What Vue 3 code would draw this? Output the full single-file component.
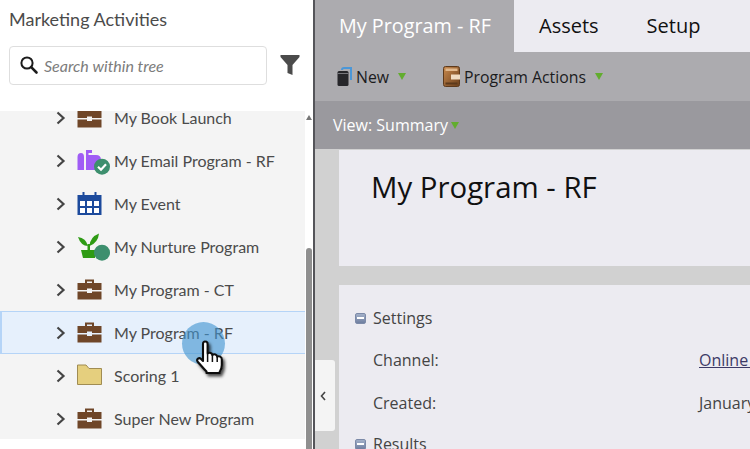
<script setup>
const rows = [
  { name: 'My Book Launch', icon: 'case' },
  { name: 'My Email Program - RF', icon: 'email' },
  { name: 'My Event', icon: 'event' },
  { name: 'My Nurture Program', icon: 'nurture' },
  { name: 'My Program - CT', icon: 'case' },
  { name: 'My Program - RF', icon: 'case', selected: true },
  { name: 'Scoring 1', icon: 'folder' },
  { name: 'Super New Program', icon: 'case' }
]
</script>

<template>
  <div class="app">
    <aside class="side">
      <h1 class="side-title">Marketing Activities</h1>
      <div class="search-row">
        <div class="search">
          <svg class="search-icon" width="20" height="20" viewBox="0 0 20 20">
            <circle cx="8" cy="8" r="5.6" fill="none" stroke="#1c1c1c" stroke-width="2" />
            <path d="M12.2 12.2 L17.5 17.5" stroke="#1c1c1c" stroke-width="2.6" stroke-linecap="round" />
          </svg>
          <span class="search-text">Search within tree</span>
        </div>
        <svg class="filter" width="20" height="22" viewBox="0 0 20 22">
          <path d="M0.5 1 H19.5 V3 L12.5 11 V21 L7.5 19 V11 L0.5 3 Z" fill="#4b4b4b" />
        </svg>
      </div>
      <div class="tree">
        <ul class="tree-list">
          <li v-for="row in rows" :key="row.name" class="tree-row" :class="{ selected: row.selected }">
            <svg class="chev" width="10" height="14" viewBox="0 0 10 14">
              <path d="M1.5 1.5 L7.5 7 L1.5 12.5" fill="none" stroke="#444" stroke-width="2.2" />
            </svg>
            <svg class="node-icon" width="28" height="28" viewBox="0 0 28 28">
              <template v-if="row.icon === 'case'">
                <path d="M9 7 V4.5 H16 V7" fill="none" stroke="#6f4628" stroke-width="2" />
                <path d="M0.5 7 H24.5 V14 H15 V12.5 H10 V14 H0.5 Z" fill="#6f4628" />
                <path d="M0.5 15.5 H10 V17 H15 V15.5 H24.5 V23.5 H0.5 Z" fill="#6f4628" />
              </template>
              <template v-else-if="row.icon === 'email'">
                <path d="M0.5 10 Q0.5 6 4 6 Q7 6 7 10 V23 H0.5 Z" fill="#a05cf5" />
                <path d="M9 23 V3 H15 V6 H11.5 V8 H19 Q24 8 24 13 V23 Z" fill="#a05cf5" />
                <circle cx="25" cy="19.7" r="8" fill="#3d8f6e" />
                <path d="M21 19.7 L24 22.7 L29 17.2" fill="none" stroke="#fff" stroke-width="2.2" />
              </template>
              <template v-else-if="row.icon === 'event'">
                <path d="M6.5 2 V6 M18.5 2 V6" stroke="#1c4a9c" stroke-width="2" />
                <path d="M0.5 5 H24.5 V25 H0.5 Z" fill="#1c4a9c" />
                <path d="M3 11 h5 v5 h-5 Z M10 11 h5 v5 h-5 Z M17 11 h5 v5 h-5 Z M3 18 h5 v5 h-5 Z M10 18 h5 v5 h-5 Z M17 18 h5 v5 h-5 Z" fill="#fff" />
              </template>
              <template v-else-if="row.icon === 'nurture'">
                <path d="M1 4 Q9 5 11 13 Q4 13 1 4 Z" fill="#2e9b14" />
                <path d="M22 0.5 Q21 10 12.5 13 Q13 4 22 0.5 Z" fill="#2e9b14" />
                <path d="M10.5 11 H13 V18 H10.5 Z" fill="#2e9b14" />
                <path d="M4 17 H18 V25 H6 Z" fill="#2e9b14" />
                <circle cx="25" cy="19.7" r="8" fill="#3d8f6e" />
              </template>
              <template v-else>
                <path d="M0.5 3 H9 L12 6.5 H24.5 V22.5 H0.5 Z" fill="#e5cf7e" stroke="#a08c52" stroke-width="1" />
              </template>
            </svg>
            <span class="node-name">{{ row.name }}</span>
          </li>
        </ul>
        <div class="scrollbar">
          <svg class="scroll-up" width="6" height="5" viewBox="0 0 6 5"><path d="M3 0 L6 5 H0 Z" fill="#777" /></svg>
          <div class="thumb"></div>
        </div>
      </div>
    </aside>

    <main class="main">
      <nav class="tabs">
        <div class="tab active">My Program - RF</div>
        <div class="tab">Assets</div>
        <div class="tab">Setup</div>
      </nav>
      <div class="toolbar">
        <div class="tool tool-new">
          <svg width="15" height="20" viewBox="0 0 15 20">
            <path d="M5 3 Q5 1 7 1 H14 V13" fill="none" stroke="#4b97d8" stroke-width="2" />
            <rect x="0.5" y="4" width="11" height="15" rx="1.5" fill="#26262a" />
            <rect x="0.5" y="6" width="11" height="1" fill="#77777c" />
          </svg>
          <span>New</span>
          <i class="drop"></i>
        </div>
        <div class="tool tool-actions">
          <svg width="18" height="21" viewBox="0 0 18 21">
            <defs>
              <linearGradient id="folio" x1="0" y1="0" x2="1" y2="1">
                <stop offset="0" stop-color="#c98a4e" />
                <stop offset="1" stop-color="#6b3f1c" />
              </linearGradient>
            </defs>
            <rect x="0.5" y="0.5" width="16" height="20" rx="2" fill="url(#folio)" stroke="#5d3a1c" />
            <rect x="2.5" y="2.5" width="12" height="2.5" fill="#e2b98d" />
            <path d="M8 8.5 H17 V13.5 H8 Z" fill="#f0dcc3" />
            <rect x="2.5" y="16.5" width="12" height="2" fill="#5d3a1c" />
          </svg>
          <span>Program Actions</span>
          <i class="drop"></i>
        </div>
      </div>
      <div class="viewbar">
        <span>View: Summary</span>
        <i class="drop"></i>
      </div>
      <div class="content">
        <section class="card head-card">
          <h2 class="page-title">My Program - RF</h2>
        </section>
        <section class="card info-card">
          <div class="group-head">
            <i class="minus"></i><span>Settings</span>
          </div>
          <div class="field first">
            <span class="label">Channel:</span>
            <a class="value link">Online Advertising</a>
          </div>
          <div class="field">
            <span class="label">Created:</span>
            <span class="value">January 12, 2021</span>
          </div>
          <div class="group-head results">
            <i class="minus"></i><span>Results</span>
          </div>
        </section>
        <button class="collapse" aria-label="Collapse">
          <svg width="6" height="10" viewBox="0 0 6 10"><path d="M5 1 L1.5 5 L5 9" fill="none" stroke="#444" stroke-width="1.6" /></svg>
        </button>
      </div>
    </main>

    <div class="click-dot"></div>
    <svg class="hand" width="34" height="44" viewBox="0 0 34 44">
      <defs>
        <filter id="hs" x="-30%" y="-30%" width="170%" height="170%">
          <feDropShadow dx="2" dy="2.5" stdDeviation="1.5" flood-color="#000" flood-opacity=".7" />
        </filter>
      </defs>
      <path filter="url(#hs)"
        d="M8 4 Q8 1.5 10.2 1.5 Q12.6 1.5 12.6 4 V13.5 Q14 12.4 15.6 13 Q17.2 13.6 17.4 15 Q18.6 13.8 20.4 14.4 Q22 15 22.2 16.6 Q23.6 15.8 25.2 16.6 Q26.8 17.4 26.8 19.6 V25 Q26.8 29 24.6 32 V33 H11.5 V31.5 Q9 29 6 25.5 L2.5 21.5 Q1.5 19.8 3 18.6 Q4.6 17.6 6 19 L8 21 Z"
        fill="#fff" stroke="#111" stroke-width="2.1" stroke-linejoin="round" />
      <path d="M12.6 14 V22 M17.4 15 V22 M22.2 16.6 V22" stroke="#111" stroke-width="1.5" fill="none" />
    </svg>
  </div>
</template>

<style>
html, body { margin: 0; padding: 0; background: #fff; overflow: hidden; }
</style>

<style scoped>
.app {
  position: relative;
  display: flex;
  width: 750px;
  height: 449px;
  overflow: hidden;
  font-family: "Open Sans", sans-serif;
  background: #fff;
}
.side {
  display: flex;
  flex-direction: column;
  flex: 0 0 313px;
  width: 313px;
  height: 449px;
  border-right: 2px solid #55555a;
  box-sizing: content-box;
}
.side-title {
  margin: 8px 0 0 9px;
  font: 400 18px/22px Lato, sans-serif;
  color: #4b4b4b;
}
.search-row {
  display: flex;
  align-items: center;
  margin: 15px 0 0 9px;
  height: 40px;
}
.search {
  display: flex;
  align-items: center;
  width: 256px;
  height: 37px;
  border: 1px solid #dedede;
  border-radius: 4px;
  background: #fff;
}
.search-icon { margin-left: 9px; }
.search-text {
  margin-left: 5px;
  padding-top: 1px;
  font: italic 400 16px/20px Lato, sans-serif;
  color: #7c7c7c;
}
.filter { margin-left: 13px; }
.tree {
  display: flex;
  align-items: flex-start;
  margin-top: 26px;
  height: 338px;
  overflow: hidden;
}
.tree-list {
  flex: 0 0 305px;
  height: 343px;
  overflow: hidden;
  list-style: none;
  margin: -15px 0 0;
  padding: 0;
  background: #f4f4f4;
}
.tree-row {
  display: flex;
  align-items: center;
  height: 43px;
  box-sizing: border-box;
  padding-left: 56px;
  color: #4b4b4b;
  font: 400 16px/20px Lato, sans-serif;
}
.tree-row.selected {
  background: #e6f0fc;
  border-top: 1px solid #b5d4f7;
  border-bottom: 1px solid #b5d4f7;
  border-left: 2px solid #b5d4f7;
  padding-left: 54px;
}
.chev { flex: none; }
.node-icon { flex: none; margin-left: 11px; margin-right: 9px; overflow: visible; }
.scrollbar {
  position: relative;
  flex: 1;
  height: 338px;
  background: #fff;
}
.scroll-up { position: absolute; left: 1px; top: 4px; }
.thumb {
  position: absolute;
  left: 1px;
  top: 137px;
  width: 6px;
  bottom: 0;
  background: #8f8f8f;
  border-radius: 3px 3px 0 0;
}
.main {
  flex: 1;
  display: flex;
  flex-direction: column;
  min-width: 0;
}
.tabs {
  display: flex;
  height: 52px;
  background: #ecebf1;
}
.tab {
  flex: none;
  padding: 0 23px 0 25px;
  font: 400 20px/52px "Open Sans", sans-serif;
  color: #111;
  white-space: nowrap;
}
.tab.active {
  width: 199px;
  box-sizing: border-box;
  padding: 0 0 0 24px;
  background: #acabaf;
  color: #fff;
  font-size: 19.8px;
}
.toolbar {
  display: flex;
  align-items: center;
  height: 49px;
  background: #acabaf;
  font-size: 15.8px;
  color: #1b1b1d;
}
.tool { display: flex; align-items: center; }
.tool-new { margin-left: 22px; }
.tool-new span { margin-left: 4px; }
.tool-actions { margin-left: 37px; }
.tool-actions span { margin-left: 3px; }
.tool .drop { margin-left: 9px; }
.drop {
  display: inline-block;
  width: 0;
  height: 0;
  border-left: 4px solid transparent;
  border-right: 4px solid transparent;
  border-top: 7px solid #62ad2e;
}
.viewbar {
  display: flex;
  align-items: center;
  height: 48px;
  padding-left: 18px;
  background: #9a999e;
  color: #fff;
  font-size: 16px;
}
.viewbar .drop { margin-left: 3px; }
.content {
  position: relative;
  flex: 1;
  background: #d1d1d1;
  padding: 1px 0 0 24px;
  overflow: hidden;
}
.card { background: #ecebf1; }
.head-card {
  height: 116px;
  box-sizing: border-box;
  padding: 17px 0 0 32px;
}
.page-title {
  margin: 0;
  font: 400 29.4px/40px "Open Sans", sans-serif;
  color: #111;
}
.info-card {
  margin-top: 19px;
  height: 200px;
  box-sizing: border-box;
  padding: 22px 0 0 16px;
  color: #444;
  font-size: 16px;
}
.group-head {
  display: flex;
  align-items: center;
  height: 22px;
}
.group-head span { margin-left: 7px; }
.results { margin-top: 9px; }
.minus {
  position: relative;
  width: 11px;
  height: 11px;
  box-sizing: border-box;
  border: 1px solid #7c8aa8;
  border-radius: 2px;
  background: linear-gradient(#a3b0c9, #6f7fa0);
}
.minus::after {
  content: "";
  position: absolute;
  left: 1px;
  right: 1px;
  top: 3px;
  height: 2px;
  background: #fff;
}
.field {
  display: flex;
  height: 43px;
  align-items: center;
  padding-left: 18px;
}
.field.first { margin-top: 9px; }
.label { width: 326px; flex: none; }
.value { white-space: nowrap; }
.link { color: #3c3a66; text-decoration: underline; }
.collapse {
  position: absolute;
  left: 0;
  top: 211px;
  width: 20px;
  height: 71px;
  padding: 0 4px 0 0;
  border: 0;
  border-radius: 0 3px 3px 0;
  background: #f4f4f4;
  display: flex;
  align-items: center;
  justify-content: center;
}
.click-dot {
  position: absolute;
  left: 182px;
  top: 322px;
  width: 43px;
  height: 43px;
  border-radius: 50%;
  background: rgba(64, 148, 208, 0.62);
}
.hand {
  position: absolute;
  left: 195px;
  top: 340px;
}
</style>
